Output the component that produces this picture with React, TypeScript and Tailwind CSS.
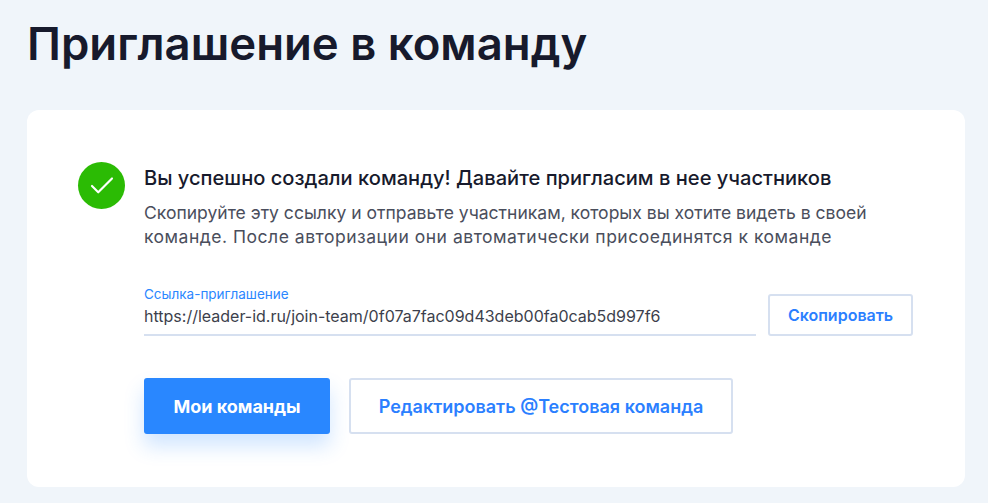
import { Check } from "lucide-react";

const font = "font-['Inter','Noto_Sans',sans-serif]";

export default function App() {
  return (
    <div className={`h-[503px] w-[988px] overflow-hidden bg-[#f0f5fa] px-[27px] ${font}`}>
      {/* Title */}
      <h1 className="pt-[17px] text-[45.5px] leading-[54px] font-semibold text-[#171a2c]">Приглашение в команду</h1>

      {/* Card */}
      <div className="mt-[39px] h-[377px] w-[938px] rounded-xl bg-white pt-[52px] pl-[51px]">
        <div className="flex">
          <div className="flex h-[47px] w-[47px] shrink-0 items-center justify-center rounded-full bg-[#2bbb04]">
            <Check className="h-[30px] w-[30px] text-white" strokeWidth={1.7} />
          </div>
          <div className="ml-[19px]">
            <div className="pt-[3px] text-[20.1px] leading-[26px] font-medium text-[#171a2c]">
              Вы успешно создали команду! Давайте пригласим в нее участников
            </div>
            <p className="mt-[10px] w-[740px] text-[17.55px] leading-[23.5px] text-[#4a4e5c]">
              Скопируйте эту ссылку и отправьте участникам, которых вы хотите видеть в своей{" "}
              <span className="tracking-[0.5px]">команде. После авторизации они автоматически присоединятся к команде</span>
            </p>
          </div>
        </div>

        {/* Invite link */}
        <div className="mt-[39px] ml-[66px] flex items-end">
          <div className="w-[612px] border-b-2 border-[#d6e0f0]">
            <div className="text-[13.5px] leading-[14px] text-[#2b87ff]">Ссылка-приглашение</div>
            <div className="pt-[3px] pb-[6px] text-[16px] leading-[24px] text-[#3c3f4c]">
              https://leader-id.ru/join-team/0f07a7fac09d43deb00fa0cab5d997f6
            </div>
          </div>
          <button className="ml-[12px] h-[42px] w-[145px] rounded-[3px] border-2 border-[#d6e0f0] bg-white text-[16px] font-semibold text-[#2b7fff]">
            Скопировать
          </button>
        </div>

        {/* Actions */}
        <div className="mt-[42px] ml-[66px] flex gap-[19px]">
          <button className="h-[56px] w-[186px] rounded-[3px] bg-[#2987ff] text-[18px] font-bold text-white shadow-[0_12px_20px_rgba(41,135,255,0.22)]">
            Мои команды
          </button>
          <button className="h-[56px] w-[384px] rounded-[3px] border-2 border-[#d6e0f0] bg-white text-[18px] font-semibold text-[#2b7fff]">
            Редактировать @Тестовая команда
          </button>
        </div>
      </div>
    </div>
  );
}
